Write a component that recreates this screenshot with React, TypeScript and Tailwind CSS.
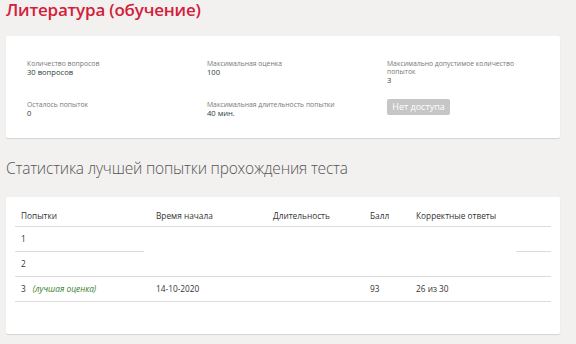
const rows = [
  { n: "1", best: false, start: "", score: "", correct: "" },
  { n: "2", best: false, start: "", score: "", correct: "" },
  { n: "3", best: true, start: "14-10-2020", score: "93", correct: "26 из 30" },
];

const Info = ({ label, value }: { label: string; value: string }) => (
  <div className="flex flex-col">
    <span className="text-[6.8px] leading-[8px] text-[#777]">{label}</span>
    <span className="text-[7.6px] leading-[9px] font-medium text-[#2f3b40]">{value}</span>
  </div>
);

export default function App() {
  return (
    <div
      className="w-[576px] h-[344px] overflow-hidden bg-[#f2f1ef] px-[6px]"
      style={{ fontFamily: '"Open Sans", "Noto Sans", sans-serif' }}
    >
      {/* title */}
      <h1 className="text-[17px] leading-[20px] font-semibold text-[#d2203b] tracking-[-0.2px]">
        Литература (обучение)
      </h1>

      {/* info card */}
      <div className="mt-[16px] w-[554px] h-[102px] bg-white rounded-[2px] shadow-[0_1px_1px_rgba(0,0,0,0.12)] pl-[21px] pt-[24px] text-[7px]">
        <div className="grid grid-cols-[180px_180px_1fr] gap-y-[14px]">
          <Info label="Количество вопросов" value="30 вопросов" />
          <Info label="Максимальная оценка" value="100" />
          <div className="flex flex-col w-[150px]">
            <span className="text-[6.8px] leading-[8px] text-[#777]">
              Максимально допустимое количество попыток
            </span>
            <span className="text-[7.6px] leading-[9px] font-medium text-[#2f3b40]">3</span>
          </div>
          <div className="pt-[2px]">
            <Info label="Осталось попыток" value="0" />
          </div>
          <div className="pt-[2px]">
            <Info label="Максимальная длительность попытки" value="40 мин." />
          </div>
          <div>
            <button className="block w-[63px] h-[16px] rounded-[2px] bg-[#c6c6c6] text-white text-[9px] leading-[16px]">
              Нет доступа
            </button>
          </div>
        </div>
      </div>

      {/* heading */}
      <h2 className="mt-[20px] text-[15.5px] leading-[20px] font-light text-[#555] tracking-[-0.2px]">
        Статистика лучшей попытки прохождения теста
      </h2>

      {/* stats card */}
      <div className="mt-[19px] w-[554px] h-[137px] bg-white rounded-[2px] shadow-[0_1px_1px_rgba(0,0,0,0.12)] px-[9px] pt-[10px]">
        <div className="text-[8.3px] text-[#333]">
          <div className="flex items-center h-[20px] border-b border-[#dcdcdc]">
            <span className="w-[141px] pl-[6px]">Попытки</span>
            <span className="w-[117px]">Время начала</span>
            <span className="w-[97px]">Длительность</span>
            <span className="w-[46px]">Балл</span>
            <span>Корректные ответы</span>
          </div>
          {rows.map((r, i) => (
            <div key={r.n}>
              <div className="flex items-center h-[24px]">
                <span className="w-[141px] pl-[6px] flex gap-[7px]">
                  <span>{r.n}</span>
                  {r.best && <span className="italic text-[#3a7d2c]">(лучшая оценка)</span>}
                </span>
                <span className="w-[117px]">{r.start}</span>
                <span className="w-[97px]"></span>
                <span className="w-[46px]">{r.score}</span>
                <span>{r.correct}</span>
              </div>
              {i === 0 ? (
                <div className="flex justify-between h-[1px]">
                  <div className="w-[129px] h-[1px] bg-[#dcdcdc]" />
                  <div className="w-[35px] h-[1px] bg-[#dcdcdc]" />
                </div>
              ) : (
                <div className="h-[1px] bg-[#dcdcdc]" />
              )}
            </div>
          ))}
        </div>
      </div>
    </div>
  );
}
